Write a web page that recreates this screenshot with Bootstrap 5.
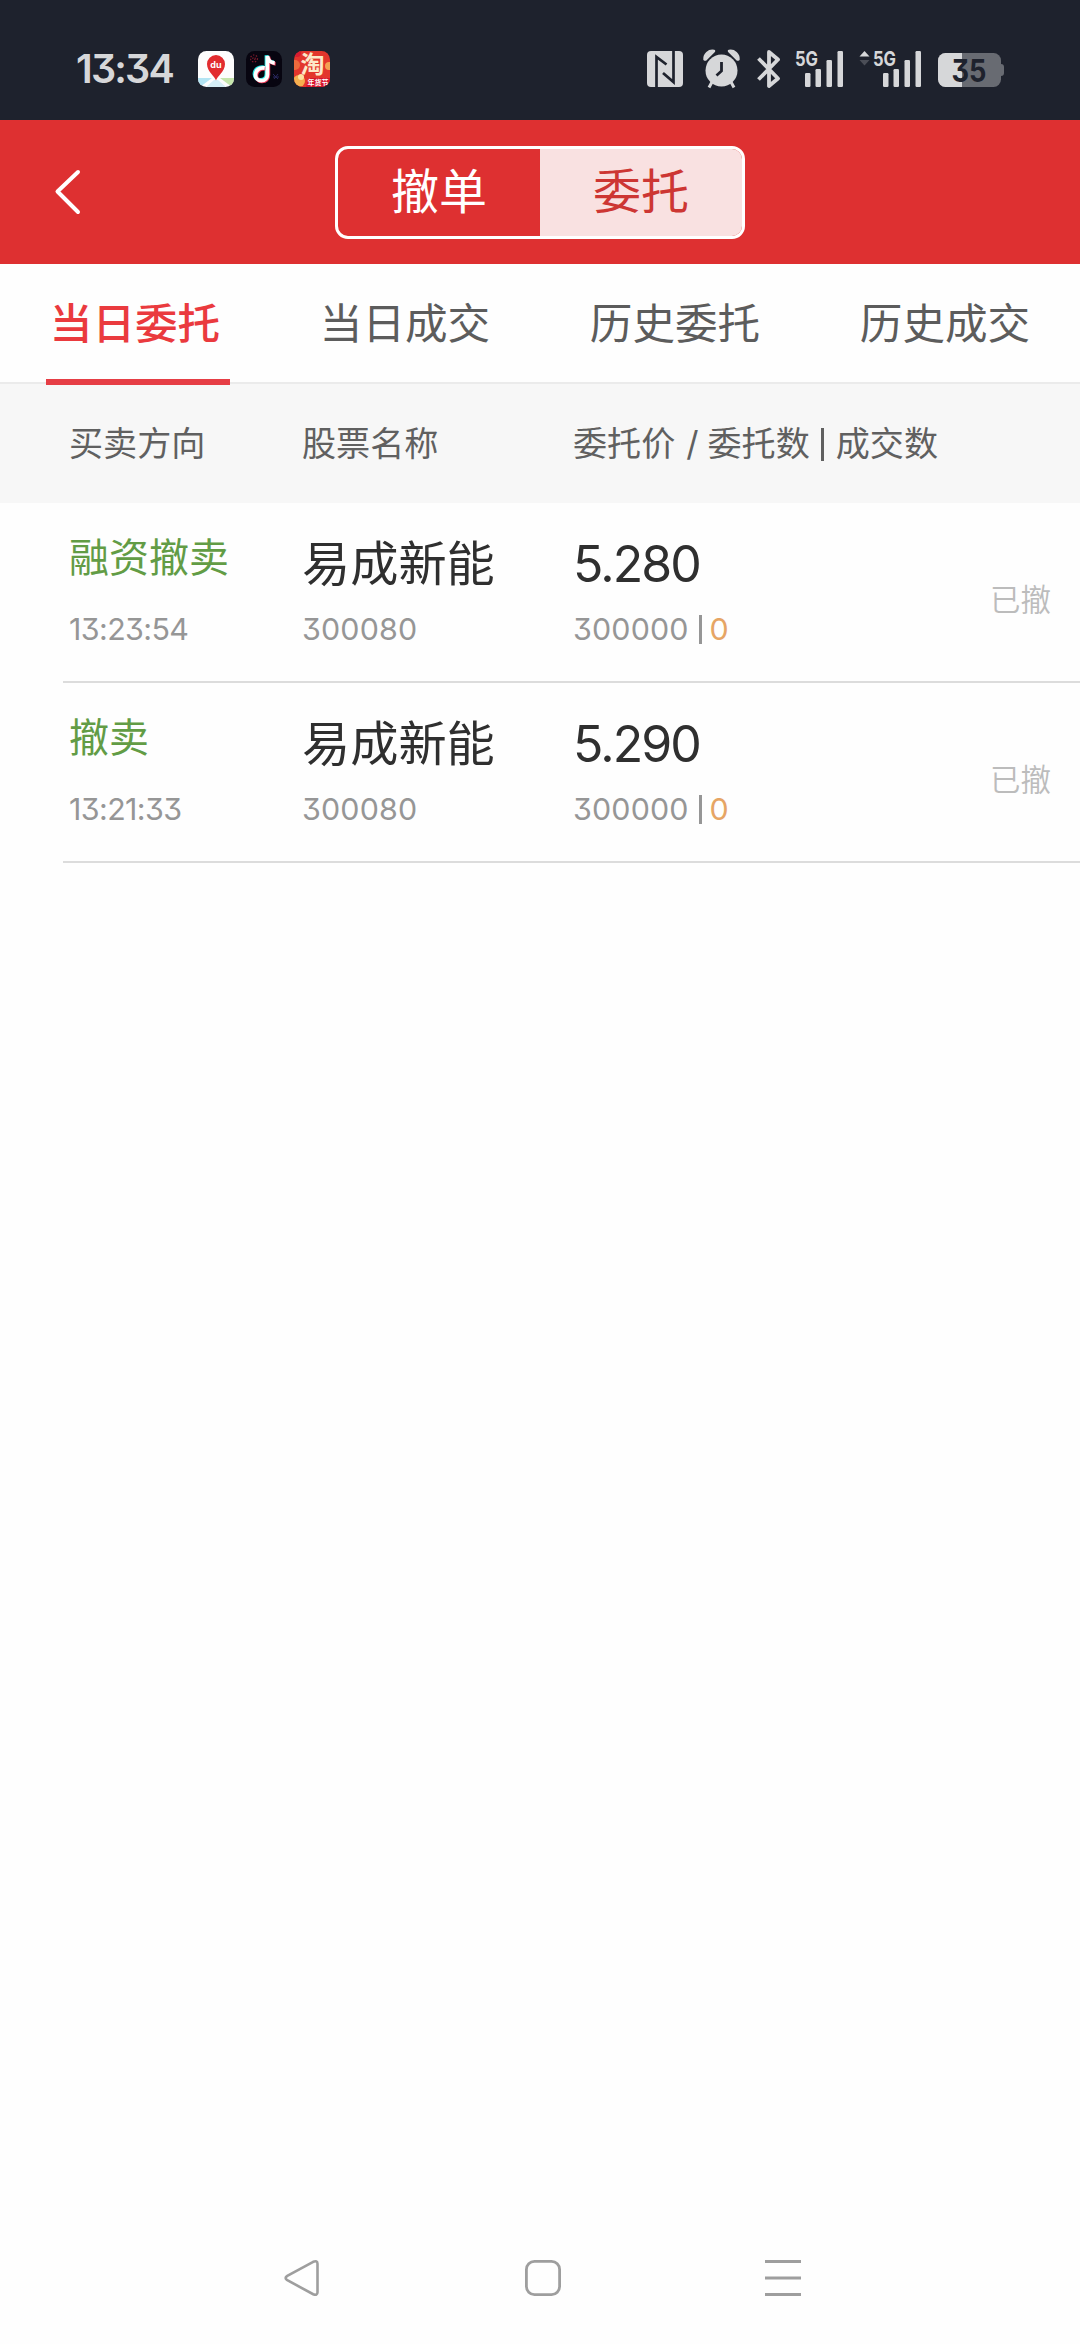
<!DOCTYPE html>
<html lang="zh-CN">
<head>
<meta charset="utf-8">
<meta name="viewport" content="width=device-width, initial-scale=1">
<title>当日委托</title>
<link href="https://cdn.jsdelivr.net/npm/bootstrap@5.3.0/dist/css/bootstrap.min.css" rel="stylesheet">
<style>
body{font-family:Inter,"Noto Sans CJK SC",sans-serif;font-feature-settings:"cv09";background:#fefefe;color:#2f2f2f}
svg{display:block;flex:none;overflow:visible}
svg text{font-family:Inter,"Noto Sans CJK SC",sans-serif}
.screen{width:1080px;height:2344px;overflow:hidden}
.statusbar{height:120px;background:#1e222d;padding:18px 76px 0 76px}
.clock{font-size:39.5px;font-weight:600;line-height:40px;color:#d6d7d9;width:122px;letter-spacing:-1.8px}
.apps{gap:12px}
.g20{margin-left:20px}.g17{margin-left:17px}.g14{margin-left:14px}.g16{margin-left:16px}
.titlebar{height:144px;background:#de3031}
.back{padding-left:53px;width:335px}
.switcher{width:410px;height:93px;border:3px solid #fff;border-radius:13px;overflow:hidden}
.switcher .btn{font-size:48px;line-height:1;border:0;border-radius:0;color:#fff;width:50%;padding:0;--bs-btn-active-bg:#f9e1e1}
.switcher .btn.active{background:#f9e1e1;color:#cd3633}
.tabs{height:120px;background:#fefefe;border-bottom:2px solid #ebebeb}
.tabs .nav-link{height:121px;padding:0 0 1px;font-size:42.6px;color:#5c5c5c;line-height:1}
.tabs .active{color:#ea3a3e;font-weight:500}
.tabs .nav-item{position:relative}
.tabs .active::after{content:"";position:absolute;left:46px;top:115px;width:184px;height:6px;background:#e63e45}
.thead-row{height:119px;background:#f7f7f7;font-size:34.1px;color:#606060;padding:2px 0 0 69px;line-height:1}
.thead-row .slash{margin:0 9px 0 11px}
.thead-row .bar{width:3px;height:33px;background:#606060;margin:0 12px 0 11px}
.c1{width:233px}.c2{width:271px}
.order{height:180px;margin-left:63px;padding-left:6px;border-bottom:2px solid #dcdcdc}
.dir{font-size:40px;line-height:50px;color:#629c45;padding-top:30px}
.stock{font-size:48.2px;line-height:60px;padding-top:31px}
.price{font-size:50px;line-height:60px;padding-top:31px;letter-spacing:-1.9px}
.sub{font-size:30.4px;line-height:36px;color:#969696;white-space:nowrap}
.clk{letter-spacing:-.6px}
.dir+.sub{margin-top:28px}
.stock+.sub,.price+.sub{margin-top:17px}
.num{letter-spacing:.15px}
.sep{width:3px;height:29px;background:#969696;margin:0 8px 0 10px}
.filled{color:#e6a565}
.state{font-size:30.5px;color:#bcbcbc;margin-left:auto;padding-right:29px;padding-top:79px;line-height:36px;height:100%;font-weight:350}
.sysnav{height:132px;padding:0 279px 0 284px}
</style>
<script src="https://cdn.jsdelivr.net/npm/bootstrap@5.3.0/dist/js/bootstrap.bundle.min.js"></script>
</head>
<body>
<div class="screen d-flex flex-column">
  <div class="statusbar d-flex align-items-center">
    <div class="clock">13:34</div>
    <div class="apps d-flex">
      <svg width="36" height="36" viewBox="0 0 36 36"><clipPath id="r"><rect width="36" height="36" rx="8.5"/></clipPath><g clip-path="url(#r)"><rect width="36" height="36" fill="#fdfdfd"/><path d="M0 27h14l-12 9H0z" fill="#b3e4f3"/><path d="M22 27h14v9h-2z" fill="#c5e6ac"/><path d="M16 29l-8 7h20l-8-7z" fill="#d5eef6"/><path d="M18 29.500c-1-4-9-9-9-16.500a9 9 0 0 1 18 0c0 7.500-8 12.500-9 16.500z" fill="#e22c2f"/><text x="18" y="17" font-size="9" font-weight="700" fill="#fff" text-anchor="middle">du</text></g></svg>
      <svg width="36" height="36" viewBox="0 0 36 36"><rect width="36" height="36" rx="8.500" fill="#070510"/><g fill="none" stroke="#7b1a2c" stroke-width="1.200" stroke-dasharray="1.500 1.500"><circle cx="8" cy="7.500" r="3.500"/><circle cx="8" cy="7.500" r="1.200"/></g><path d="M27 23l5 5m0-5l-4 5m-1-2h6" stroke="#29275d" fill="none"/><g fill="none" stroke-width="3.800"><path d="M17.800 16.300c-5-.8-9.300 2.200-9.300 6.700 0 3.500 2.700 5.900 5.900 5.900 3.700 0 6.100-2.600 6.100-6.200V4.300c.5 4 3.300 6.800 7.300 7" stroke="#27e6e4"/><path d="M17.800 16.300c-5-.8-9.300 2.200-9.300 6.700 0 3.500 2.700 5.900 5.900 5.900 3.700 0 6.100-2.600 6.100-6.200V4.300c.5 4 3.300 6.800 7.300 7" stroke="#f23a59" transform="translate(1.800 1.500)"/><path d="M17.800 16.300c-5-.8-9.300 2.200-9.300 6.700 0 3.500 2.700 5.900 5.900 5.900 3.700 0 6.100-2.600 6.100-6.200V4.300c.5 4 3.300 6.800 7.300 7" stroke="#fff" transform="translate(.9 .7)"/></g></svg>
      <svg width="36" height="36" viewBox="0 0 36 36"><g clip-path="url(#r)"><rect width="36" height="36" fill="#e3362c"/><circle cx="1" cy="14" r="5" fill="#ee6a3c"/><circle cx="35" cy="15" r="4" fill="#f3a052"/><circle cx="3" cy="2" r="4" fill="#d81b30"/><circle cx="5" cy="30" r="6" fill="#f5b04f"/><circle cx="7" cy="26" r="3" fill="#ffe1a0"/><path d="M12 36l3-9h21v9z" fill="#d8152c"/><text x="18.500" y="22" font-size="24" font-weight="700" fill="#fde9c9" text-anchor="middle">淘</text><text x="24" y="34" font-size="7" font-weight="700" fill="#fff" text-anchor="middle">年货节</text></g></svg>
    </div>
    <div class="d-flex ms-auto">
      <svg width="36" height="40" viewBox="0 0 36 40"><rect y="2" width="36" height="36" rx="4" fill="#d6d7d9"/><g fill="none" stroke="#1e222d" stroke-width="2.700"><path d="M9.500 38V8l10 7.500"/><path d="M26.500 2v31L16 24"/></g></svg>
      <svg class="g20" width="37" height="40" viewBox="0 0 37 40"><g fill="#d6d7d9"><circle cx="18.500" cy="21.500" r="16"/><path d="M1.500 10.500A8 8 0 0 1 11 2L2.500 10.500zM35.500 10.500A8 8 0 0 0 26 2l8.500 8.500z" stroke="#d6d7d9" stroke-width="2.500" stroke-linejoin="round"/></g><path d="M9 33l-3 5.500M28 33l3 5.500" stroke="#d6d7d9" stroke-width="3"/><path d="M18.500 13v9l-5 4.500" fill="none" stroke="#1e222d" stroke-width="2.800"/></svg>
      <svg class="g17" width="23" height="40" viewBox="0 0 23 40"><path d="M1.500 9.500L21 29.500 12 37V3l9 7.500L1.500 30.500" fill="none" stroke="#d6d7d9" stroke-width="3.800" stroke-linejoin="round"/></svg>
      <svg class="g14" width="50" height="40" viewBox="0 0 50 40"><text x="1" y="17" font-size="20" font-weight="700" fill="#d6d7d9" textLength="23" lengthAdjust="spacingAndGlyphs">5G</text><g fill="#d6d7d9"><rect x="11" y="24" width="5.500" height="14" rx="1.200"/><rect x="21.500" y="20" width="5.500" height="18" rx="1.200"/><rect x="32.500" y="11" width="5.500" height="27" rx="1.200"/><rect x="43.500" y="2" width="5.500" height="36" rx="1.200"/></g></svg>
      <svg class="g14" width="64" height="40" viewBox="0 0 64 40"><path d="M1.500 7.500L6.500 2l5 5.500z" fill="#d6d7d9"/><path d="M1.500 11L6.500 16.500l5-5.500z" fill="#4b4e57"/><text x="15" y="17" font-size="20" font-weight="700" fill="#d6d7d9" textLength="23" lengthAdjust="spacingAndGlyphs">5G</text><g fill="#d6d7d9"><rect x="25" y="24" width="5.500" height="14" rx="1.200"/><rect x="35.500" y="20" width="5.500" height="18" rx="1.200"/><rect x="46.500" y="11" width="5.500" height="27" rx="1.200"/><rect x="57.500" y="2" width="5.500" height="36" rx="1.200"/></g></svg>
      <svg class="g16" width="66" height="40" viewBox="0 0 66 40"><clipPath id="b"><rect y="4" width="63" height="34" rx="7.500"/></clipPath><g clip-path="url(#b)"><rect width="66" height="40" fill="#686b72"/><rect width="24" height="40" fill="#d6d7d9"/></g><path d="M63 15q3 0 3 3v6q0 3-3 3z" fill="#686b72"/><text x="13.500" y="32.500" font-size="31" font-weight="700" fill="#1e222d" textLength="35" lengthAdjust="spacingAndGlyphs">35</text></svg>
    </div>
  </div>

  <header class="titlebar d-flex align-items-center">
    <div class="back"><svg width="30" height="48" viewBox="0 0 30 48"><path d="M25 4L4.500 23.500 25 44" fill="none" stroke="#fff" stroke-width="4" stroke-linecap="round" stroke-linejoin="round"/></svg></div>
    <div class="switcher d-flex"><button class="btn">撤单</button><button class="btn active">委托</button></div>
  </header>

  <ul class="tabs nav nav-fill flex-nowrap">
    <li class="nav-item"><a class="nav-link active d-flex align-items-center justify-content-center">当日委托</a></li>
    <li class="nav-item"><a class="nav-link d-flex align-items-center justify-content-center">当日成交</a></li>
    <li class="nav-item"><a class="nav-link d-flex align-items-center justify-content-center">历史委托</a></li>
    <li class="nav-item"><a class="nav-link d-flex align-items-center justify-content-center">历史成交</a></li>
  </ul>

  <div class="thead-row d-flex align-items-center"><div class="c1">买卖方向</div><div class="c2">股票名称</div><div class="d-flex align-items-center"><span>委托价</span><span class="slash">/</span><span>委托数</span><span class="bar"></span><span>成交数</span></div></div>

  <div class="order d-flex">
    <div class="c1"><div class="dir">融资撤卖</div><div class="sub clk">13:23:54</div></div>
    <div class="c2"><div class="stock">易成新能</div><div class="sub num">300080</div></div>
    <div><div class="price">5.280</div><div class="sub num d-flex align-items-center">300000<span class="sep"></span><span class="filled">0</span></div></div>
    <div class="state">已撤</div>
  </div>
  <div class="order d-flex">
    <div class="c1"><div class="dir">撤卖</div><div class="sub clk">13:21:33</div></div>
    <div class="c2"><div class="stock">易成新能</div><div class="sub num">300080</div></div>
    <div><div class="price">5.290</div><div class="sub num d-flex align-items-center">300000<span class="sep"></span><span class="filled">0</span></div></div>
    <div class="state">已撤</div>
  </div>

  <nav class="sysnav d-flex align-items-center justify-content-between mt-auto">
    <svg width="36" height="38" viewBox="0 0 36 38"><path d="M29.200 2.800L3.300 16.800q-3.400 2.200 0 4.400L29.200 35.200q4.300 1.600 4.300-2V4.800q0-3.600-4.300-2z" fill="none" stroke="#9e9e9e" stroke-width="2.600"/></svg>
    <svg width="36" height="38" viewBox="0 0 36 38"><rect x="1.400" y="2.400" width="33.200" height="33.200" rx="8" fill="none" stroke="#9e9e9e" stroke-width="2.800"/></svg>
    <svg width="36" height="38" viewBox="0 0 36 38"><path d="M0 2.500h36M0 19h36M0 35.500h36" stroke="#9e9e9e" stroke-width="3"/></svg>
  </nav>
</div>
</body>
</html>
